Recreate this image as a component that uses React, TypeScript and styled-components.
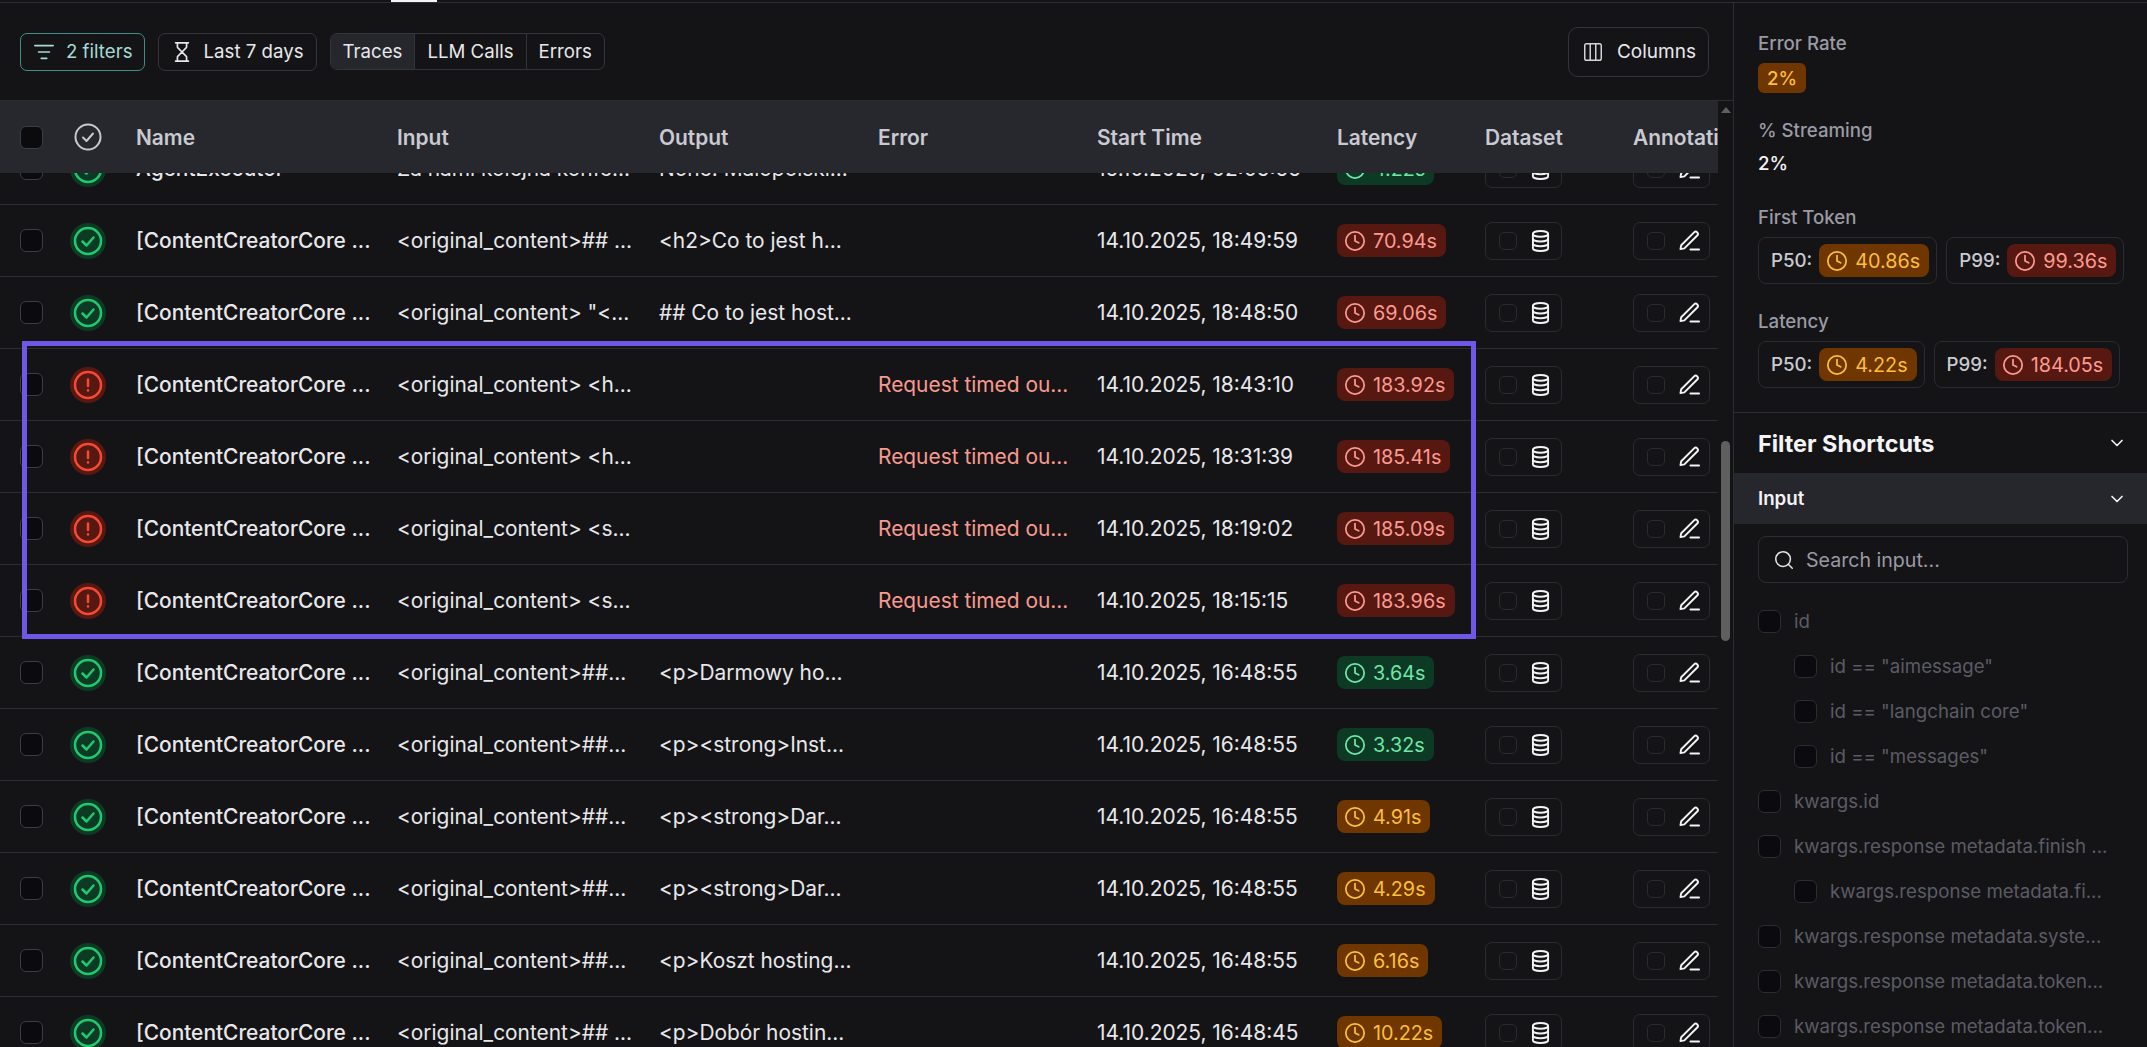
import React from "react";
import styled, { createGlobalStyle } from "styled-components";
import { ChevronDown, Clock, Columns3, Hourglass, ListFilter, Search } from "lucide-react";

type Tone = "green" | "amber" | "red";

const toneBg: Record<Tone, string> = { green: "#0c3a24", amber: "#6f3600", red: "#561810" };
const toneFg: Record<Tone, string> = { green: "#6ee7a8", amber: "#fbbf3c", red: "#fd9a90" };

const NAME = "[ContentCreatorCore ...";

const rows = [
  { failed: false, name: "AgentExecutor", input: "Za nami kolejna konfe...", output: "None. Małopolski...", error: "", time: "15.10.2025, 02:05:55", latency: "4.22s", tone: "green" as Tone },
  { failed: false, name: NAME, input: "<original_content>## ...", output: "<h2>Co to jest h...", error: "", time: "14.10.2025, 18:49:59", latency: "70.94s", tone: "red" as Tone },
  { failed: false, name: NAME, input: '<original_content> "<...', output: "## Co to jest host...", error: "", time: "14.10.2025, 18:48:50", latency: "69.06s", tone: "red" as Tone },
  { failed: true, name: NAME, input: "<original_content> <h...", output: "", error: "Request timed ou...", time: "14.10.2025, 18:43:10", latency: "183.92s", tone: "red" as Tone },
  { failed: true, name: NAME, input: "<original_content> <h...", output: "", error: "Request timed ou...", time: "14.10.2025, 18:31:39", latency: "185.41s", tone: "red" as Tone },
  { failed: true, name: NAME, input: "<original_content> <s...", output: "", error: "Request timed ou...", time: "14.10.2025, 18:19:02", latency: "185.09s", tone: "red" as Tone },
  { failed: true, name: NAME, input: "<original_content> <s...", output: "", error: "Request timed ou...", time: "14.10.2025, 18:15:15", latency: "183.96s", tone: "red" as Tone },
  { failed: false, name: NAME, input: "<original_content>##...", output: "<p>Darmowy ho...", error: "", time: "14.10.2025, 16:48:55", latency: "3.64s", tone: "green" as Tone },
  { failed: false, name: NAME, input: "<original_content>##...", output: "<p><strong>Inst...", error: "", time: "14.10.2025, 16:48:55", latency: "3.32s", tone: "green" as Tone },
  { failed: false, name: NAME, input: "<original_content>##...", output: "<p><strong>Dar...", error: "", time: "14.10.2025, 16:48:55", latency: "4.91s", tone: "amber" as Tone },
  { failed: false, name: NAME, input: "<original_content>##...", output: "<p><strong>Dar...", error: "", time: "14.10.2025, 16:48:55", latency: "4.29s", tone: "amber" as Tone },
  { failed: false, name: NAME, input: "<original_content>##...", output: "<p>Koszt hosting...", error: "", time: "14.10.2025, 16:48:55", latency: "6.16s", tone: "amber" as Tone },
  { failed: false, name: NAME, input: "<original_content>## ...", output: "<p>Dobór hostin...", error: "", time: "14.10.2025, 16:48:45", latency: "10.22s", tone: "amber" as Tone },
];

const shortcuts = [
  { label: "id", nested: false },
  { label: 'id == "aimessage"', nested: true },
  { label: 'id == "langchain core"', nested: true },
  { label: 'id == "messages"', nested: true },
  { label: "kwargs.id", nested: false },
  { label: "kwargs.response metadata.finish ...", nested: false },
  { label: "kwargs.response metadata.fi...", nested: true },
  { label: "kwargs.response metadata.syste...", nested: false },
  { label: "kwargs.response metadata.token...", nested: false },
  { label: "kwargs.response metadata.token...", nested: false },
];

const DatabaseIcon = () => (
  <svg width="19" height="22" viewBox="0 0 20 23" fill="none" stroke="#f4f4f6" strokeWidth="2" strokeLinecap="round">
    <ellipse cx="10" cy="4" rx="8" ry="3" />
    <path d="M2 4v15c0 1.700 3.600 3 8 3s8-1.300 8-3V4" />
    <path d="M2 9c0 1.700 3.600 3 8 3s8-1.300 8-3" />
    <path d="M2 14c0 1.700 3.600 3 8 3s8-1.300 8-3" />
  </svg>
);

const PenIcon = () => (
  <svg width="21" height="21" viewBox="0 0 22 22" fill="none" stroke="#f4f4f6" strokeWidth="2" strokeLinecap="round" strokeLinejoin="round">
    <path d="M1.500 20l.8-4L15.800 2.500a2.300 2.300 0 0 1 3.300 3.300L5.600 19.300z" />
    <path d="M12 20.500h9" />
  </svg>
);

const StatusIcon = ({ failed }: { failed: boolean }) => (
  <StatusHalo $failed={failed}>
    <svg width="30" height="30" viewBox="0 0 30 30" fill="none" stroke={failed ? "#f44a36" : "#22c96f"} strokeWidth="2.500" strokeLinecap="round" strokeLinejoin="round">
      <circle cx="15" cy="15" r="13" />
      {failed ? <path d="M15 9.500v6.500M15 20.300v.2" /> : <path d="M9.500 15.500l4 4 7-8" />}
    </svg>
  </StatusHalo>
);

const HeaderStatus = () => (
  <HeaderStatusWrap>
    <svg width="28" height="28" viewBox="0 0 28 28" fill="none" stroke="#c9cad1" strokeWidth="2" strokeLinecap="round" strokeLinejoin="round">
      <circle cx="14" cy="14" r="12.500" />
      <path d="M9 14.500l3.500 3.500 6.500-7.500" />
    </svg>
  </HeaderStatusWrap>
);

const Latency = ({ value, tone }: { value: string; tone: Tone }) => (
  <Pill $tone={tone}>
    <Clock size={22} strokeWidth={1.9} />
    {value}
  </Pill>
);

const Percentile = ({ label, value, tone }: { label: string; value: string; tone: Tone }) => (
  <PercentileCard>
    <PercentileLabel>{label}</PercentileLabel>
    <Latency value={value} tone={tone} />
  </PercentileCard>
);

const App = () => (
  <Page>
    <GlobalStyle />
    <TopStrip>
      <ActiveTab />
    </TopStrip>
    <Body>
      <Main>
        <Toolbar>
          <FilterButton>
            <ListFilter size={22} strokeWidth={1.8} />2 filters
          </FilterButton>
          <ToolButton>
            <Hourglass size={22} strokeWidth={1.8} />Last 7 days
          </ToolButton>
          <Segments>
            <Segment $active>Traces</Segment>
            <Segment>LLM Calls</Segment>
            <Segment>Errors</Segment>
          </Segments>
          <ColumnsButton>
            <Columns3 size={22} strokeWidth={1.6} color="#d5d5da" />Columns
          </ColumnsButton>
        </Toolbar>
        <TableArea>
          <Table>
            <HeaderRow>
              <CheckCell>
                <Checkbox $strong />
              </CheckCell>
              <div>
                <HeaderStatus />
              </div>
              <span>Name</span>
              <span>Input</span>
              <span>Output</span>
              <span>Error</span>
              <span>Start Time</span>
              <span>Latency</span>
              <span>Dataset</span>
              <HeaderClip>Annotati</HeaderClip>
            </HeaderRow>
            <Rows>
              {rows.map((row, i) => (
                <Row key={i}>
                  <CheckCell>
                    <Checkbox $strong />
                  </CheckCell>
                  <div>
                    <StatusIcon failed={row.failed} />
                  </div>
                  <NameCell>{row.name}</NameCell>
                  <span>{row.input}</span>
                  <span>{row.output}</span>
                  <ErrorCell>{row.error}</ErrorCell>
                  <span>{row.time}</span>
                  <div>
                    <Latency value={row.latency} tone={row.tone} />
                  </div>
                  <ActionBox>
                    <SmallCheck />
                    <DatabaseIcon />
                  </ActionBox>
                  <ActionBox>
                    <SmallCheck />
                    <PenIcon />
                  </ActionBox>
                </Row>
              ))}
            </Rows>
            <Highlight />
          </Table>
          <ScrollTrack>
            <ScrollArrow />
            <ScrollThumb />
          </ScrollTrack>
        </TableArea>
      </Main>
      <Sidebar>
        <Stats>
          <StatLabel>Error Rate</StatLabel>
          <PlainBadge>2%</PlainBadge>
          <StatLabel>% Streaming</StatLabel>
          <StatValue>2%</StatValue>
          <StatLabel>First Token</StatLabel>
          <PercentileRow>
            <Percentile label="P50:" value="40.86s" tone="amber" />
            <Percentile label="P99:" value="99.36s" tone="red" />
          </PercentileRow>
          <StatLabel>Latency</StatLabel>
          <PercentileRow>
            <Percentile label="P50:" value="4.22s" tone="amber" />
            <Percentile label="P99:" value="184.05s" tone="red" />
          </PercentileRow>
        </Stats>
        <ShortcutsHead>
          Filter Shortcuts
          <ChevronDown size={20} strokeWidth={2} />
        </ShortcutsHead>
        <GroupHead>
          Input
          <ChevronDown size={20} strokeWidth={2} />
        </GroupHead>
        <SearchBox>
          <Search size={22} strokeWidth={1.7} color="#e4e4e8" />
          Search input...
        </SearchBox>
        <ShortcutList>
          {shortcuts.map((item, i) => (
            <ShortcutItem key={i} $nested={item.nested}>
              <Checkbox />
              {item.label}
            </ShortcutItem>
          ))}
        </ShortcutList>
      </Sidebar>
    </Body>
  </Page>
);

const GlobalStyle = createGlobalStyle`
  html, body {
    margin: 0;
    height: 100%;
    overflow: hidden;
    background: #141416;
  }
  * {
    box-sizing: border-box;
  }
`;

const Page = styled.div`
  width: 2147px;
  height: 1047px;
  overflow: hidden;
  display: flex;
  flex-direction: column;
  background: #141416;
  color: #e8e8ec;
  font-family: Inter, "Noto Sans", sans-serif;
  font-size: 18.67px;
`;

const TopStrip = styled.div`
  height: 3px;
  flex: none;
  border-bottom: 1px solid #2c2d32;
  padding-left: 391px;
`;

const ActiveTab = styled.div`
  width: 46px;
  height: 2px;
  background: #f4f4f6;
`;

const Body = styled.div`
  flex: 1;
  min-height: 0;
  display: flex;
`;

const Main = styled.div`
  width: 1734px;
  flex: none;
  display: flex;
  flex-direction: column;
  border-right: 1px solid #2c2d32;
`;

const Toolbar = styled.div`
  height: 98px;
  flex: none;
  display: flex;
  align-items: center;
  gap: 13px;
  padding: 0 24px 0 20px;
  border-bottom: 1px solid #2c2d32;
`;

const ToolButton = styled.div`
  height: 38px;
  display: flex;
  align-items: center;
  gap: 11px;
  padding: 0 12px;
  border: 1px solid #34353b;
  border-radius: 7px;
  font-weight: 400;
  white-space: nowrap;
`;

const FilterButton = styled(ToolButton)`
  border-color: #3f8f8c;
  color: #a7d9d6;
  padding-right: 11px;
`;

const ColumnsButton = styled(ToolButton)`
  height: 50px;
  margin-left: auto;
  padding: 0 12px 0 13px;
  border-radius: 10px;
  gap: 13px;
  font-size: 19px;
`;

const Segments = styled.div`
  height: 37px;
  display: flex;
  border: 1px solid #34353b;
  border-radius: 7px;
  overflow: hidden;
  margin-bottom: 1px;
`;

const Segment = styled.div<{ $active?: boolean }>`
  display: flex;
  align-items: center;
  padding: 0 12px;
  font-weight: 400;
  white-space: nowrap;
  background: ${props => (props.$active ? "#26272c" : "transparent")};
  & + & {
    border-left: 1px solid #34353b;
  }
`;

const TableArea = styled.div`
  flex: 1;
  min-height: 0;
  display: flex;
`;

const Table = styled.div`
  width: 1718px;
  flex: none;
  position: relative;
  overflow: hidden;
  font-size: 20.9px;
`;

const columns = "70px 66px 261px 262px 219px 219px 240px 148px 148px 85px";

const HeaderRow = styled.div`
  position: relative;
  z-index: 1;
  height: 72px;
  display: grid;
  grid-template-columns: ${columns};
  align-items: center;
  background: #27282d;
  color: #c9cad1;
  font-weight: 600;
`;

const HeaderClip = styled.span`
  overflow: hidden;
  white-space: nowrap;
`;

const HeaderStatusWrap = styled.div`
  width: 36px;
  display: flex;
  justify-content: center;
`;

const Rows = styled.div`
  margin-top: -40px;
`;

const Row = styled.div`
  height: 72px;
  display: grid;
  grid-template-columns: ${columns};
  align-items: center;
  border-bottom: 1px solid #2c2d32;
  white-space: nowrap;
`;

const CheckCell = styled.div`
  padding-left: 20px;
  display: flex;
`;

const Checkbox = styled.span<{ $strong?: boolean }>`
  width: 23px;
  height: 23px;
  flex: none;
  display: block;
  background: #0a0a0f;
  border: 1px solid ${props => (props.$strong ? "#3c3d44" : "#2c2d32")};
  border-radius: 6px;
`;

const StatusHalo = styled.div<{ $failed: boolean }>`
  width: 36px;
  height: 36px;
  border-radius: 50%;
  display: flex;
  align-items: center;
  justify-content: center;
  background: ${props => (props.$failed ? "#561810" : "#0c3a24")};
`;

const NameCell = styled.span`
  font-weight: 500;
`;

const ErrorCell = styled.span`
  color: #f99a90;
`;

const Pill = styled.span<{ $tone: Tone }>`
  display: inline-flex;
  align-items: center;
  gap: 7px;
  height: 33px;
  padding: 0 9px 0 7px;
  border-radius: 8px;
  background: ${props => toneBg[props.$tone]};
  color: ${props => toneFg[props.$tone]};
  font-size: 19.8px;
  white-space: nowrap;
`;

const ActionBox = styled.div`
  width: 77px;
  height: 38px;
  display: flex;
  align-items: center;
  gap: 14px;
  padding-left: 13px;
  border: 1px solid #2a2b30;
  border-radius: 7px;
`;

const SmallCheck = styled.span`
  width: 18px;
  height: 18px;
  flex: none;
  border: 1px solid #2a2b30;
  border-radius: 5px;
`;

const Highlight = styled.div`
  position: absolute;
  left: 22px;
  top: 240px;
  width: 1454px;
  height: 298px;
  border: 5px solid #6f57e8;
  z-index: 2;
  pointer-events: none;
`;

const ScrollTrack = styled.div`
  width: 15px;
  flex: none;
  display: flex;
  flex-direction: column;
  align-items: center;
`;

const ScrollArrow = styled.div`
  margin-top: 6px;
  width: 0;
  height: 0;
  border-left: 5px solid transparent;
  border-right: 5px solid transparent;
  border-bottom: 6px solid #5f5f5f;
`;

const ScrollThumb = styled.div`
  margin-top: 328px;
  width: 9px;
  height: 200px;
  background: #5f5f5f;
  border-radius: 5px;
`;

const Sidebar = styled.aside`
  flex: 1;
  min-width: 0;
  display: flex;
  flex-direction: column;
`;

const Stats = styled.div`
  height: 410px;
  flex: none;
  padding: 28px 19px 0 24px;
  border-bottom: 1px solid #2c2d32;
`;

const StatLabel = styled.div`
  color: #9a9aa5;
  font-weight: 500;
  line-height: 26px;
  margin-bottom: 6px;
`;

const PlainBadge = styled.div`
  width: fit-content;
  display: flex;
  align-items: center;
  height: 30px;
  padding: 0 9px;
  border-radius: 6px;
  background: #6f3600;
  color: #fbbf3c;
  font-weight: 500;
  margin-bottom: 25px;
`;

const StatValue = styled.div`
  font-weight: 500;
  color: #f4f4f6;
  line-height: 30px;
  margin-bottom: 26px;
  margin-top: -1px;
`;

const PercentileRow = styled.div`
  display: flex;
  gap: 9px;
  margin-bottom: 25px;
`;

const PercentileCard = styled.div`
  height: 47px;
  display: flex;
  align-items: center;
  gap: 7px;
  padding: 0 7px 0 12px;
  border: 1px solid #2a2b30;
  border-radius: 8px;
`;

const PercentileLabel = styled.span`
  color: #c9cad1;
  font-weight: 500;
`;

const ShortcutsHead = styled.div`
  height: 60px;
  flex: none;
  display: flex;
  align-items: center;
  justify-content: space-between;
  padding: 0 20px 0 24px;
  font-size: 23.4px;
  font-weight: 700;
  color: #f4f4f6;
`;

const GroupHead = styled.div`
  height: 51px;
  flex: none;
  display: flex;
  align-items: center;
  justify-content: space-between;
  padding: 0 20px 0 24px;
  background: #26272c;
  font-weight: 600;
  color: #f4f4f6;
`;

const SearchBox = styled.div`
  height: 47px;
  flex: none;
  margin: 12px 19px 0 24px;
  display: flex;
  align-items: center;
  gap: 11px;
  padding: 0 14px;
  border: 1px solid #2c2d32;
  border-radius: 8px;
  color: #9a9aa5;
  font-size: 19.6px;
`;

const ShortcutList = styled.div`
  margin-top: 23px;
  padding: 0 0 0 24px;
  display: flex;
  flex-direction: column;
  gap: 15px;
`;

const ShortcutItem = styled.div<{ $nested: boolean }>`
  height: 30px;
  display: flex;
  align-items: center;
  gap: 13px;
  white-space: nowrap;
  color: #5b5b65;
  padding-left: ${props => (props.$nested ? "36px" : "0")};
`;

export default App;
